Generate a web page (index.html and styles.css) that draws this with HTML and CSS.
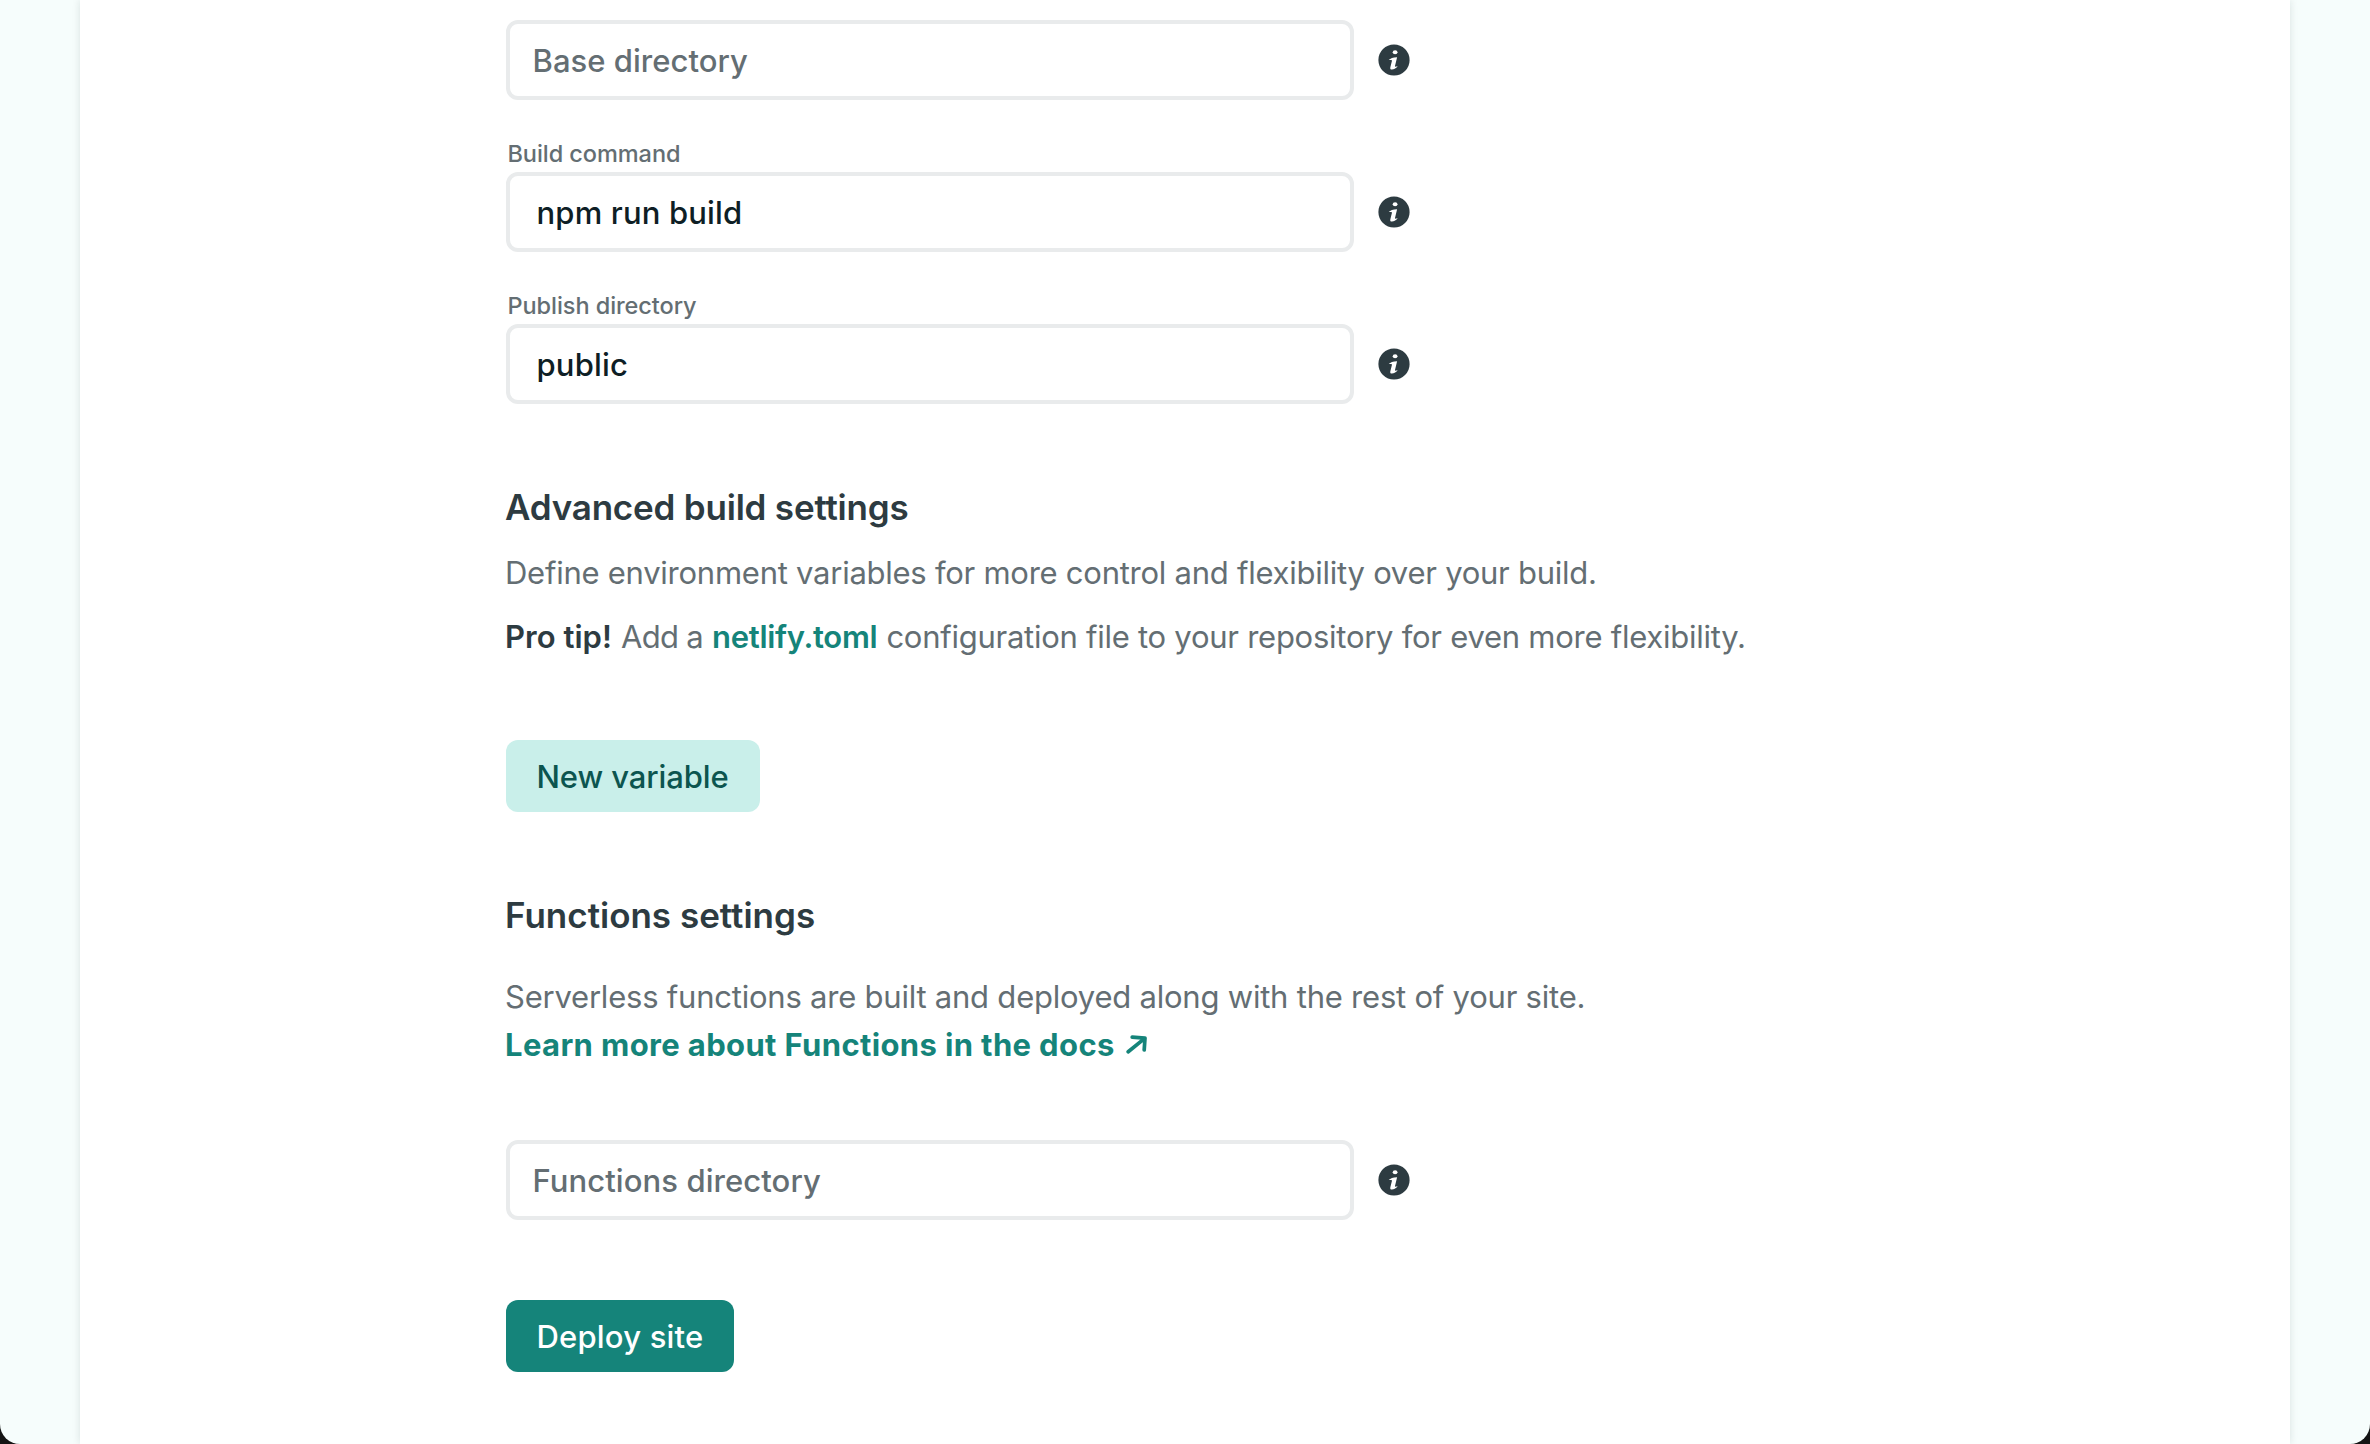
FILE: index.html
```html
<!DOCTYPE html>
<html lang="en">
<head>
<meta charset="utf-8">
<title>Deploy settings</title>
<link rel="stylesheet" href="styles.css">
</head>
<body>
<svg width="0" height="0" class="sprite" aria-hidden="true">
  <symbol id="info" viewBox="0 0 32 32">
    <circle cx="16" cy="16" r="15.6" fill="#2d3b41"/>
    <ellipse cx="17.1" cy="8.3" rx="2.4" ry="2" fill="#fff"/>
    <path d="M10.7 16.1C12.4 14.3 15 13.2 19.1 13.2L17 22C16.8 23 17.4 22.8 19.7 22.2C18.5 24 16 25.6 13.9 25.6C12.3 25.6 12 24.6 12.4 23L13.9 17C14.1 16 13.5 15.8 10.7 16.1Z" fill="#fff"/>
  </symbol>
</svg>
<div class="window">
  <main class="panel">
    <div class="field">
      <input class="input base" placeholder="Base directory" aria-label="Base directory">
      <svg class="info"><use href="#info"/></svg>
    </div>
    <label class="label build" for="cmd">Build command</label>
    <div class="field">
      <input class="input filled" id="cmd" value="npm run build">
      <svg class="info"><use href="#info"/></svg>
    </div>
    <label class="label" for="pub">Publish directory</label>
    <div class="field">
      <input class="input filled" id="pub" value="public">
      <svg class="info"><use href="#info"/></svg>
    </div>

    <h2 class="heading advanced">Advanced build settings</h2>
    <p class="text intro">Define environment variables for more control and flexibility over your build.</p>
    <p class="text tip"><strong class="strong">Pro tip!</strong><span class="add">Add a</span><a class="link">netlify.toml</a><span class="rest">configuration file to your repository for even more flexibility.</span></p>
    <button class="button secondary">New variable</button>

    <h2 class="heading">Functions settings</h2>
    <p class="text serverless">Serverless functions are built and deployed along with the rest of your site.</p>
    <p class="text docs"><a class="docs-link">Learn more about Functions in the docs</a><svg class="arrow" viewBox="0 0 22 20"><path d="M6.2 2.2L19 3.2L18.2 15M18.4 3.6L2.2 16.8" fill="none" stroke="#15847a" stroke-width="3.7" stroke-linecap="round" stroke-linejoin="round"/></svg></p>
    <div class="field functions">
      <input class="input" placeholder="Functions directory" aria-label="Functions directory">
      <svg class="info"><use href="#info"/></svg>
    </div>
    <button class="button primary">Deploy site</button>
  </main>
</div>
</body>
</html>
```
FILE: styles.css
```css
* { box-sizing: border-box; }

body {
  margin: 0;
  height: 1444px;
  overflow: hidden;
  background: #141414;
  font-family: Inter, sans-serif;
  font-size: 31px;
}

.sprite { display: block; }

.window {
  height: 1444px;
  padding: 0 80px;
  background: #f6fdfc;
  border-radius: 0 0 20px 20px;
  overflow: hidden;
}

.panel {
  height: 1444px;
  padding: 20px 0 0 425px;
  background: #fff;
  box-shadow: 0 0 8px rgba(14, 30, 37, 0.12);
}

.field {
  display: flex;
  align-items: center;
  gap: 24px;
  height: 80px;
  margin-left: 1px;
}

.input {
  width: 848px;
  height: 80px;
  padding: 1px 22px 0 22.5px;
  border: 4px solid #e9ebec;
  border-radius: 12px;
  background: #fff;
  color: #0e1e25;
  font: 500 31px Inter, sans-serif;
  letter-spacing: 0.08px;
  outline: 0;
}

.input.base { letter-spacing: 0.035px; }
.input.filled { padding-left: 26.5px; letter-spacing: 0.16px; }
.input::placeholder { color: #646e73; opacity: 1; }

.info { width: 32px; height: 32px; flex: none; }

.label {
  display: block;
  margin: 35px 0 0 2.5px;
  color: #646e73;
  font-size: 23.5px;
  font-weight: 500;
  line-height: 37px;
  letter-spacing: -0.06px;
}

.heading {
  margin: 82px 0 0;
  color: #2d3b41;
  font-size: 35px;
  font-weight: 600;
  line-height: 42px;
}

.advanced { letter-spacing: -0.197px; }

.text {
  margin: 0;
  color: #646e73;
  line-height: 47px;
  white-space: nowrap;
}

.intro { margin-top: 21px; letter-spacing: -0.253px; }

.tip { display: flex; gap: 9px; margin-top: 17px; }
.strong { color: #2d3b41; font-weight: 600; letter-spacing: 0.04px; }
.add { letter-spacing: -0.7px; }
.link { color: #15847a; font-weight: 600; letter-spacing: -0.3px; }
.rest { letter-spacing: -0.26px; }

.serverless { margin-top: 37px; letter-spacing: -0.22px; }

.docs { display: flex; align-items: center; gap: 11px; margin-top: 1px; }
.docs-link { color: #15847a; font-weight: 700; letter-spacing: 0.367px; }
.arrow { width: 22px; height: 20px; }

.functions { margin-top: 72px; }

.button {
  display: block;
  height: 72px;
  margin: 80px 0 0 1px;
  padding: 13px 0 12px 30.5px;
  border: 0;
  border-radius: 12px;
  font: 500 31px/47px Inter, sans-serif;
  text-align: left;
}

.secondary {
  width: 254px;
  background: #c9efea;
  color: #0c554f;
  letter-spacing: -0.1px;
}

.primary {
  width: 228px;
  background: #15847a;
  color: #fff;
  letter-spacing: 0.196px;
}
```
